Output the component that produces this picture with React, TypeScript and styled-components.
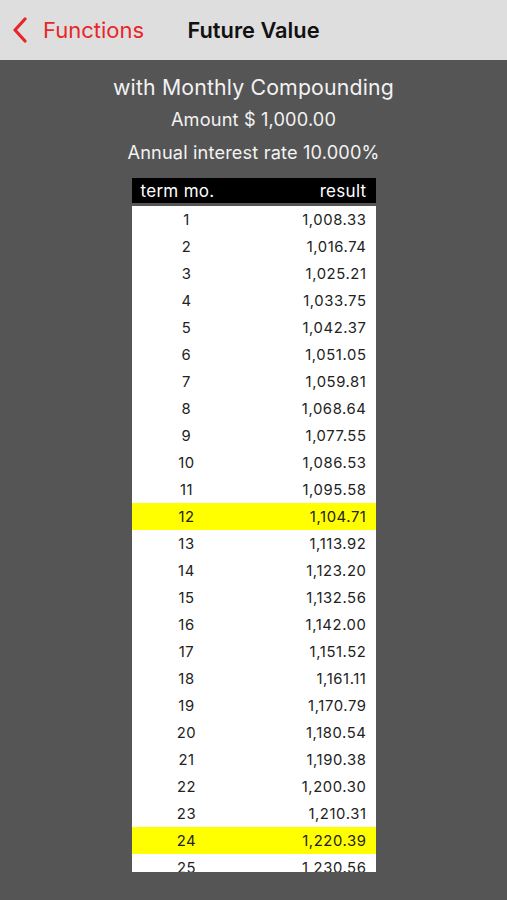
import styled, { createGlobalStyle } from "styled-components";

const GlobalStyle = createGlobalStyle`
  html, body {
    margin: 0;
    padding: 0;
    background: #555555;
    font-family: Inter, "Liberation Sans", sans-serif;
  }
`;

const PRINCIPAL = 1000;
const RATE = 0.1;
const ROWS = 25;

const Page = styled.div`
  width: 507px;
  height: 900px;
  overflow: hidden;
  background: #555555;
  display: flex;
  flex-direction: column;
`;

const NavBar = styled.div`
  height: 60px;
  flex-shrink: 0;
  background: #dedede;
  display: grid;
  grid-template-columns: 1fr auto 1fr;
  align-items: center;
`;

const BackButton = styled.div`
  display: flex;
  align-items: center;
  gap: 15px;
  padding-left: 12px;
  color: #e8262a;
  font-size: 22px;
`;

const NavTitle = styled.div`
  font-size: 21.8px;
  font-weight: 600;
  color: #111;
`;

const Content = styled.div`
  display: flex;
  flex-direction: column;
  align-items: center;
  padding-top: 13px;
  color: #f2f2f2;
`;

const Subtitle = styled.div<{ $size: number; $mt: number }>`
  font-size: ${(p) => p.$size}px;
  margin-top: ${(p) => p.$mt}px;
  line-height: 28px;
  letter-spacing: 0.15px;
`;

const Table = styled.div`
  margin-top: 12px;
  width: 244px;
  display: flex;
  flex-direction: column;
`;

const HeaderRow = styled.div`
  height: 25px;
  background: #000;
  color: #fff;
  display: flex;
  align-items: center;
  justify-content: space-between;
  padding: 0 9px;
  font-size: 17px;
  letter-spacing: 0.3px;
  margin-bottom: 3px;
`;

const Body = styled.div`
  background: #fff;
  height: 666px;
  overflow: hidden;
`;

const Row = styled.div<{ $hl: boolean }>`
  height: 27px;
  display: grid;
  grid-template-columns: 110px 1fr;
  align-items: center;
  background: ${(p) => (p.$hl ? "#ffff00" : "#fff")};
  color: #222;
  font-size: 14.8px;
  letter-spacing: 0.6px;
`;

const Term = styled.span`
  text-align: center;
`;

const Result = styled.span`
  text-align: right;
  padding-right: 9px;
`;

const fmt = (n: number) =>
  n.toLocaleString("en-US", { minimumFractionDigits: 2, maximumFractionDigits: 2 });

export default function App() {
  const rows = Array.from({ length: ROWS }, (_, i) => {
    const m = i + 1;
    return { m, value: PRINCIPAL * Math.pow(1 + RATE / 12, m) };
  });

  return (
    <Page>
      <GlobalStyle />
      <NavBar>
        <BackButton>
          <svg width="16" height="26" viewBox="0 0 16 26">
            <path
              d="M13 2 L3 13 L13 24"
              fill="none"
              stroke="#e8262a"
              strokeWidth="3.2"
              strokeLinecap="round"
              strokeLinejoin="round"
            />
          </svg>
          Functions
        </BackButton>
        <NavTitle>Future Value</NavTitle>
        <div />
      </NavBar>
      <Content>
        <Subtitle $size={21.3} $mt={0}>with Monthly Compounding</Subtitle>
        <Subtitle $size={18.2} $mt={4}>Amount $ 1,000.00</Subtitle>
        <Subtitle $size={18.2} $mt={5}>Annual interest rate 10.000%</Subtitle>
        <Table>
          <HeaderRow>
            <span>term mo.</span>
            <span>result</span>
          </HeaderRow>
          <Body>
            {rows.map((r) => (
              <Row key={r.m} $hl={r.m % 12 === 0}>
                <Term>{r.m}</Term>
                <Result>{fmt(r.value)}</Result>
              </Row>
            ))}
          </Body>
        </Table>
      </Content>
    </Page>
  );
}
